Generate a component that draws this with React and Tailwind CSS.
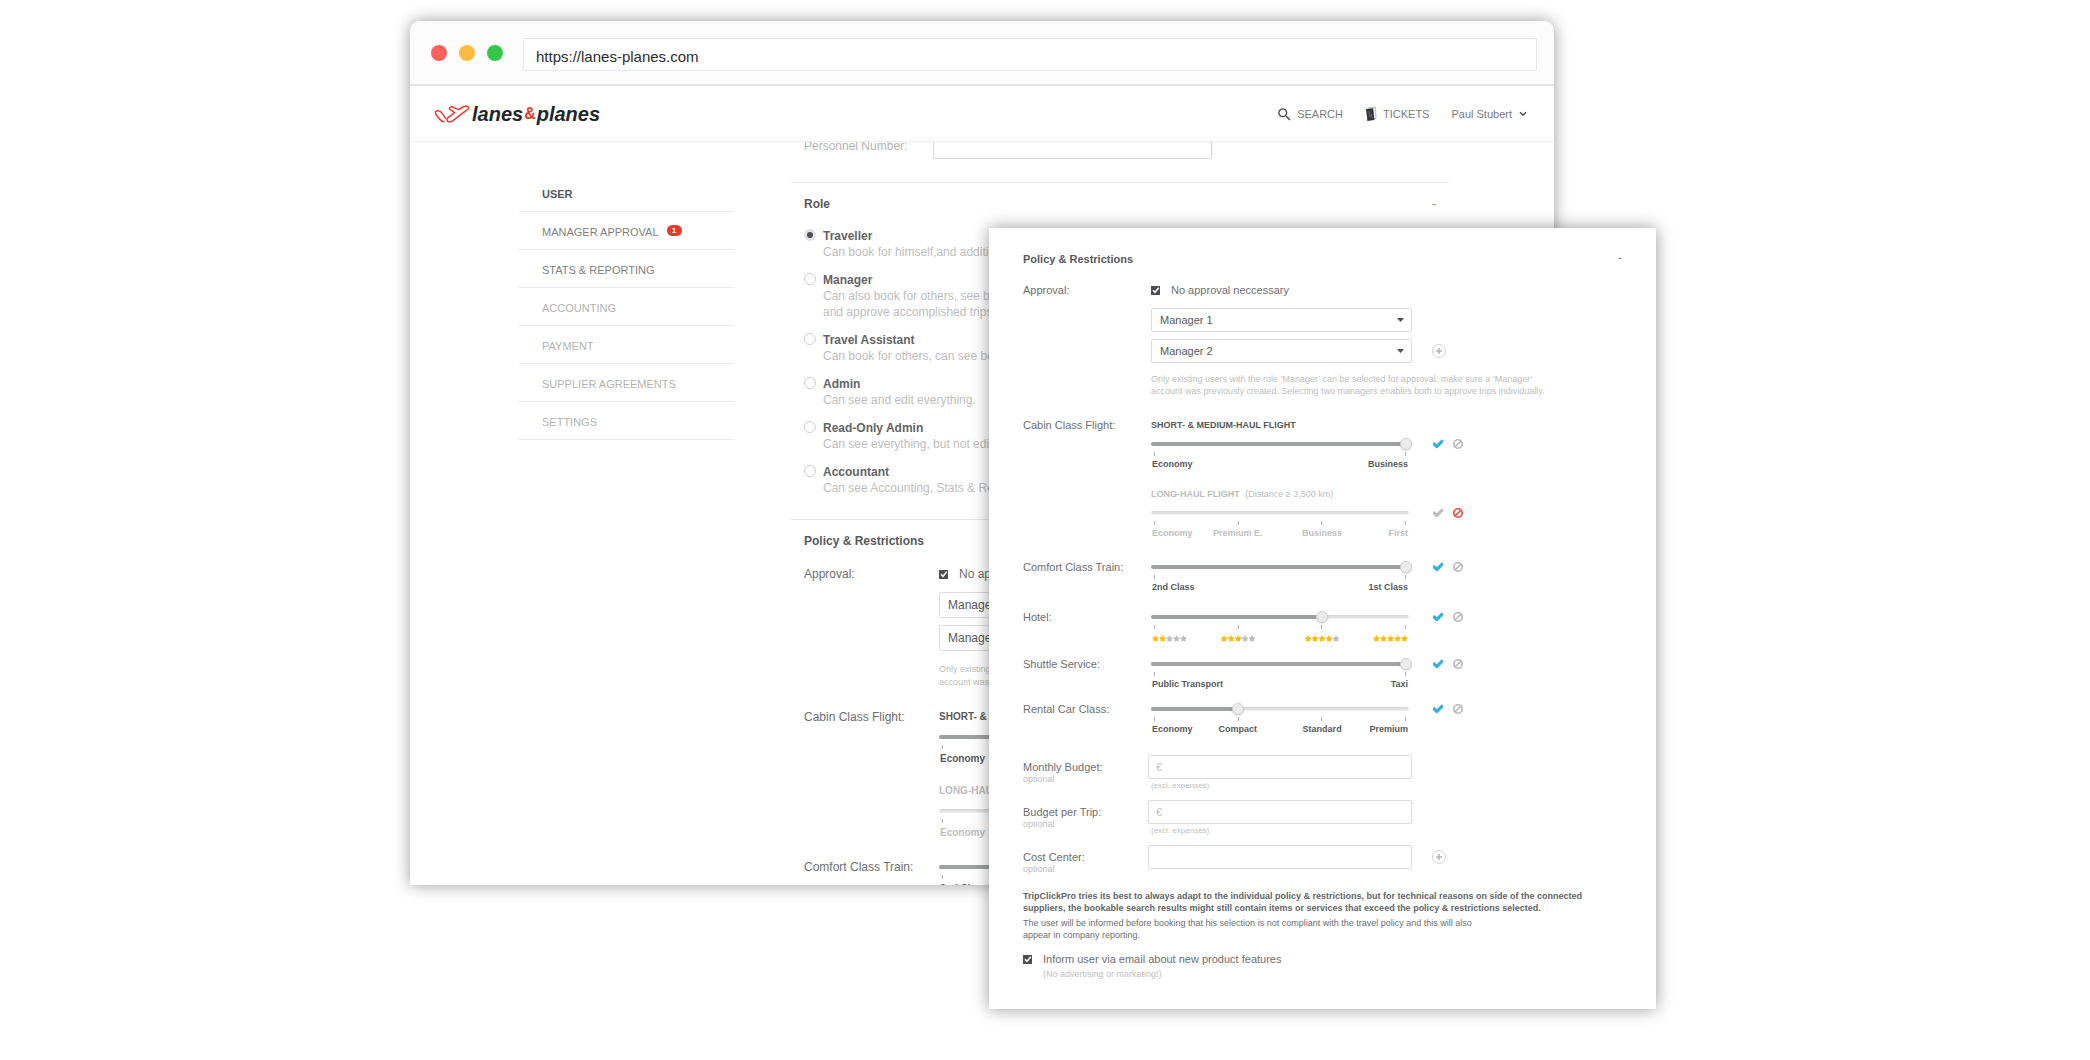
import { useState } from 'react';
import { FaCheck, FaStar } from 'react-icons/fa';
import { MdSearch } from 'react-icons/md';
import { ChevronDown } from 'lucide-react';

// Two densities of the same policy form: inside the page and in the detached sheet
const REGULAR = {
  title: 'text-[12px]',
  text: 'text-[12px]',
  row: 'grid grid-cols-[135px_1fr]',
  approval: 'mt-[17px]',
  control: 'h-[26px] w-[275px]',
  hint: 'mt-3 w-[460px] text-[9px] leading-[13px]',
  track: 'w-[272px]',
  heading: 'text-[10px]',
  slider: 'mt-[6px]',
  ticks: 'mt-[2px]',
  tickLabels: 'mt-[3px] h-[13px] text-[10px] leading-[13px]',
  longHaul: 'mt-[18px]',
  train: 'mt-[22px]',
};

const COMPACT = {
  title: 'text-[11px]',
  text: 'text-[11px]',
  row: 'grid grid-cols-[128px_1fr]',
  approval: 'mt-[15px]',
  control: 'h-6 w-[261px]',
  hint: 'mt-[10px] w-[440px] text-[9px] leading-3',
  track: 'w-[258px]',
  heading: 'text-[9px]',
  slider: 'mt-[5px]',
  ticks: 'mt-[2px]',
  tickLabels: 'mt-[2px] h-3 text-[9px] leading-3',
  longHaul: 'mt-4',
  train: 'mt-[22px]',
};

const MENU = [
  { label: 'USER', tone: 'font-bold text-[#58595b]' },
  { label: 'MANAGER APPROVAL', tone: 'text-[#808080]', badge: 1 },
  { label: 'STATS & REPORTING', tone: 'text-[#808080]' },
  { label: 'ACCOUNTING', tone: 'text-[#b3b3b3]' },
  { label: 'PAYMENT', tone: 'text-[#b3b3b3]' },
  { label: 'SUPPLIER AGREEMENTS', tone: 'text-[#b3b3b3]' },
  { label: 'SETTINGS', tone: 'text-[#b3b3b3]' },
];

const ROLES = [
  { name: 'Traveller', text: 'Can book for himself,and additional travellers.' },
  {
    name: 'Manager',
    text: 'Can also book for others, see bookings of his team and approve accomplished trips.',
  },
  { name: 'Travel Assistant', text: 'Can book for others, can see bookings.' },
  { name: 'Admin', text: 'Can see and edit everything.' },
  { name: 'Read-Only Admin', text: 'Can see everything, but not edit.' },
  { name: 'Accountant', text: 'Can see Accounting, Stats & Reporting.' },
];

const Logo = () => (
  <a href="#home" className="flex items-center text-[20px] leading-6 font-bold italic text-[#20262c]">
    <svg viewBox="103 281 108 54" className="h-[18px] w-9" fill="none" stroke="#e8392d" strokeWidth="4.500" strokeLinejoin="round" strokeLinecap="round">
      <path d="M138 321 L125 303 C121 298 112 297 108 301 C105 306 121 331 133 331" />
      <path d="M165 304 L149 293 C149 286 158 285 163 289 L177 295 L190 287 C197 283 207 284 207 290 C207 294 200 297 196 300 L160 328 C155 332 147 333 144 330 C140 327 142 321 146 318 Z" />
    </svg>
    <span className="ml-0.5">lanes</span>
    <span className="mx-px text-[16px] not-italic text-[#e8392d]">&amp;</span>
    <span>planes</span>
  </a>
);

const TicketIcon = () => (
  <svg viewBox="0 0 12 16" className="h-4 w-3">
    <path d="M3 2 L10.500 1 L11 12 L9 13" fill="#f4f4f4" stroke="#aaa" strokeWidth="0.8" />
    <path d="M1 3 L8.200 2.200 L9.400 14 L2.400 15 Z" fill="#2f353b" />
    <path d="M4 5 L5 11 M6.500 8 L6.800 12" stroke="#7d8388" strokeWidth="0.8" />
  </svg>
);

const BanIcon = ({ className }) => (
  <svg viewBox="0 0 10 10" className={`h-[10px] w-[10px] ${className}`} fill="none" stroke="currentColor" strokeWidth="1.600">
    <circle cx="5" cy="5" r="4.200" />
    <path d="M2.200 7.800 L7.800 2.200" />
  </svg>
);

const AddButton = ({ label }) => (
  <button type="button" aria-label={label} className="ml-5 text-[#b5b5b5]">
    <svg viewBox="0 0 14 14" className="h-[14px] w-[14px]" fill="none" stroke="currentColor">
      <circle cx="7" cy="7" r="6.500" stroke="#d2d2d2" />
      <path d="M7 4 V10 M4 7 H10" strokeWidth="1.500" />
    </svg>
  </button>
);

const Checkbox = ({ id, checked, onChange }) => (
  <span className="relative inline-flex h-[9px] w-[9px] shrink-0">
    <input
      id={id}
      type="checkbox"
      checked={checked}
      onChange={onChange}
      className="peer h-[9px] w-[9px] appearance-none border border-[#4d4f52] checked:bg-[#4d4f52]"
    />
    <svg viewBox="0 0 9 9" className="pointer-events-none absolute inset-0 hidden h-[9px] w-[9px] peer-checked:block" fill="none" stroke="#fff" strokeWidth="1.500">
      <path d="M2 4.300 L4 6.300 L7.800 1.800" />
    </svg>
  </span>
);

const Select = ({ label, value, className }) => (
  <span className="relative inline-flex">
    <select
      aria-label={label}
      defaultValue={value}
      className={`appearance-none rounded-[2px] border border-[#dcdcdc] bg-white pl-2 pr-6 text-[#58595b] ${className}`}
    >
      <option>Manager 1</option>
      <option>Manager 2</option>
    </select>
    <svg viewBox="0 0 7 4" className="pointer-events-none absolute top-1/2 right-2 -mt-0.5 h-1 w-[7px]" fill="#4d4f52">
      <path d="M0 0 H7 L3.500 4 Z" />
    </svg>
  </span>
);

const Stars = ({ count }) => (
  <span className="flex" role="img" aria-label={`${count} stars`}>
    {[1, 2, 3, 4, 5].map((n) => (
      <FaStar key={n} className={`h-[7px] w-[7px] ${n <= count ? 'text-[#ffbb0e]' : 'text-[#bdbdbd]'}`} />
    ))}
  </span>
);

const TickLabel = ({ index, last, position, children }) => {
  if (index === 0) return <span className="absolute left-px">{children}</span>;
  if (index === last) return <span className="absolute right-px">{children}</span>;
  return (
    <span className="absolute -translate-x-1/2" style={{ left: `${position}%` }}>
      {children}
    </span>
  );
};

const ClassSlider = ({ label, stops, initial, disabled = false, size }) => {
  const [value, setValue] = useState(initial);
  const last = stops.length - 1;
  // ticks sit 3px inside either end of the track
  const tickPosition = (i) => 1 + (i / last) * 98;

  return (
    <div>
      <div className="flex items-center">
        <div className={`relative h-3 ${size.track}`}>
          <div className="absolute inset-x-0 top-1 h-1 rounded-full bg-gradient-to-b from-[#d4d4d4] to-[#f0f0f0]">
            {!disabled && (
              <div className="h-full rounded-full bg-[#a0a1a1]" style={{ width: `${tickPosition(value)}%` }} />
            )}
          </div>
          <input
            type="range"
            aria-label={label}
            min={0}
            max={last}
            value={value}
            disabled={disabled}
            onChange={(e) => setValue(Number(e.target.value))}
            className="absolute -left-[3px] h-3 w-[calc(100%+6px)] appearance-none bg-transparent disabled:opacity-0 [&::-webkit-slider-thumb]:h-3 [&::-webkit-slider-thumb]:w-3 [&::-webkit-slider-thumb]:appearance-none [&::-webkit-slider-thumb]:rounded-full [&::-webkit-slider-thumb]:border [&::-webkit-slider-thumb]:border-[#cfcfcf] [&::-webkit-slider-thumb]:bg-[#ebebeb] [&::-webkit-slider-thumb]:shadow-sm"
          />
        </div>
        <button type="button" aria-label={`Allow ${label}`} className={`ml-6 ${disabled ? 'text-[#bdbdbd]' : 'text-[#30b1dc]'}`}>
          <FaCheck className="h-[10px] w-[10px]" stroke="currentColor" strokeWidth={60} />
        </button>
        <button type="button" aria-label={`Block ${label}`} className="ml-[10px]">
          <BanIcon className={disabled ? 'text-[#f2463a]' : 'text-[#b5b5b5]'} />
        </button>
      </div>
      <div className={`flex h-1 justify-between px-[3px] ${size.ticks} ${size.track}`}>
        {stops.map((_, i) => (
          <span key={i} className="w-px bg-[#b0b0b0]" />
        ))}
      </div>
      <div className={`relative font-bold whitespace-nowrap ${disabled ? 'text-[#bdbdbd]' : 'text-[#58595b]'} ${size.tickLabels} ${size.track}`}>
        {stops.map((stop, i) => (
          <TickLabel key={i} index={i} last={last} position={tickPosition(i)}>
            {typeof stop === 'number' ? <span className="flex pt-1"><Stars count={stop} /></span> : stop}
          </TickLabel>
        ))}
      </div>
    </div>
  );
};

const SliderRow = ({ label, className, size, ...slider }) => (
  <div className={`${size.row} ${className}`}>
    <span className="leading-3">{label}:</span>
    <ClassSlider label={label} size={size} {...slider} />
  </div>
);

const BudgetField = ({ id, label, prefix, note, action }) => (
  <div className="grid grid-cols-[125px_1fr]">
    <label htmlFor={id} className="pt-1 leading-4">
      {label}:
      <span className="block text-[9px] leading-2 text-[#bdbdbd]">optional</span>
    </label>
    <div>
      <div className="flex items-center">
        <input
          id={id}
          type="text"
          placeholder={prefix}
          className="h-6 w-[264px] rounded-[2px] border border-[#dcdcdc] px-[7px] placeholder:text-[#bdbdbd]"
        />
        {action}
      </div>
      {note && <p className="mt-[2px] pl-[3px] text-[8px] leading-[10px] text-[#bdbdbd]">{note}</p>}
    </div>
  </div>
);

const PolicyForm = ({ id, size }) => {
  const [noApproval, setNoApproval] = useState(true);

  return (
    <section className={`text-[#6d6e70] ${size.text}`}>
      <div className="flex justify-between">
        <h2 className={`leading-4 font-bold text-[#58595b] ${size.title}`}>Policy &amp; Restrictions</h2>
        <button type="button" aria-label="Collapse policy" className="h-3 leading-3">-</button>
      </div>

      <div className={`${size.row} ${size.approval}`}>
        <span className="leading-4">Approval:</span>
        <div>
          <div className="flex h-4 items-center">
            <Checkbox id={`${id}-approval`} checked={noApproval} onChange={() => setNoApproval(!noApproval)} />
            <label htmlFor={`${id}-approval`} className="ml-[11px]">No approval neccessary</label>
          </div>
          <div className="mt-[10px] flex">
            <Select label="First manager" value="Manager 1" className={size.control} />
          </div>
          <div className="mt-[7px] flex items-center">
            <Select label="Second manager" value="Manager 2" className={size.control} />
            <AddButton label="Add manager" />
          </div>
          <p className={`text-[#bdbdbd] ${size.hint}`}>
            Only existing users with the role ‘Manager’ can be selected for approval; make sure a ‘Manager’
            <br />
            account was previously created. Selecting two managers enables both to approve trips individually.
          </p>
        </div>
      </div>

      <div className={`mt-5 ${size.row}`}>
        <span className="leading-4">Cabin Class Flight:</span>
        <div>
          <h3 className={`leading-4 font-bold text-[#58595b] ${size.heading}`}>SHORT- &amp; MEDIUM-HAUL FLIGHT</h3>
          <div className={size.slider}>
            <ClassSlider label="Short-haul class" stops={['Economy', 'Business']} initial={1} size={size} />
          </div>
          <h3 className={`leading-4 font-bold text-[#bdbdbd] ${size.heading} ${size.longHaul}`}>
            LONG-HAUL FLIGHT <span className="ml-[3px] font-normal">(Distance ≥ 3,500 km)</span>
          </h3>
          <div className={size.slider}>
            <ClassSlider label="Long-haul class" stops={['Economy', 'Premium E.', 'Business', 'First']} initial={0} disabled size={size} />
          </div>
        </div>
      </div>

      <SliderRow label="Comfort Class Train" stops={['2nd Class', '1st Class']} initial={1} size={size} className={size.train} />
      <SliderRow label="Hotel" stops={[2, 3, 4, 5]} initial={2} size={size} className="mt-[18px]" />
      <SliderRow label="Shuttle Service" stops={['Public Transport', 'Taxi']} initial={1} size={size} className="mt-[15px]" />
      <SliderRow label="Rental Car Class" stops={['Economy', 'Compact', 'Standard', 'Premium']} initial={1} size={size} className="mt-[13px]" />
    </section>
  );
};

const BrowserBar = () => (
  <div className="flex h-[65px] items-center border-b-2 border-[#e4e4e4] bg-[#fcfcfc] pr-[17px] pl-[21px]">
    <div className="flex gap-3">
      <span className="h-4 w-4 rounded-full bg-[#fc605b]" />
      <span className="h-4 w-4 rounded-full bg-[#fdbc40]" />
      <span className="h-4 w-4 rounded-full bg-[#34c749]" />
    </div>
    <input
      type="text"
      aria-label="Address"
      defaultValue="https://lanes-planes.com"
      className="mt-1 ml-5 h-[33px] min-w-0 flex-1 rounded-[2px] border border-[#e8e9f0] bg-white px-3 pt-1 text-[15px] text-[#2b2b2f]"
    />
  </div>
);

const PageHeader = () => (
  <header className="flex h-14 items-center justify-between border-b border-[#ececec] bg-white pr-[26px] pl-6">
    <Logo />
    <nav className="flex items-center pt-px text-[11px] text-[#7a7b7d]">
      <a href="#search" className="flex items-center gap-1">
        <MdSearch className="h-[17px] w-[17px] text-[#4d4f52]" />
        SEARCH
      </a>
      <a href="#tickets" className="ml-[22px] flex items-center gap-[6px]">
        <TicketIcon />
        TICKETS
      </a>
      <button type="button" className="ml-[22px] flex items-center gap-[6px]">
        Paul Stubert
        <ChevronDown className="h-[10px] w-[10px] text-[#58595b]" strokeWidth={4} />
      </button>
    </nav>
  </header>
);

const SideMenu = () => (
  <nav className="mt-8 w-[216px] shrink-0 text-[11px]">
    <ul>
      {MENU.map(({ label, tone, badge }) => (
        <li key={label} className="border-b border-[#e9e9e9]">
          <a href="#menu" className={`flex h-[37px] items-center px-6 pt-1 ${tone}`}>
            {label}
            {badge && (
              <span className="mb-1 ml-2 flex h-[11px] w-[15px] items-center justify-center rounded-full bg-[#e8392d] text-[8px] font-bold text-white">
                {badge}
              </span>
            )}
          </a>
        </li>
      ))}
    </ul>
  </nav>
);

const RoleSection = () => {
  const [role, setRole] = useState('Traveller');

  return (
    <section className="mt-[23px] border-t border-[#ececec] px-[13px] pt-[13px] text-[12px]">
      <div className="flex justify-between">
        <h2 className="leading-4 font-bold text-[#58595b]">Role</h2>
        <button type="button" aria-label="Collapse role" className="leading-4 text-[#808080]">-</button>
      </div>
      <div className="mt-4 flex flex-col gap-3">
        {ROLES.map(({ name, text }) => (
          <label key={name} className="flex w-[310px] gap-[7px] leading-4 text-[#bdbdbd]">
            <input
              type="radio"
              name="role"
              checked={role === name}
              onChange={() => setRole(name)}
              className="mt-px h-3 w-3 shrink-0 appearance-none rounded-full border border-[#cfcfcf] bg-white checked:border-[3px] checked:border-[#e2e2e2] checked:bg-[#4d4f52]"
            />
            <span>
              <span className="block font-bold text-[#636466]">{name}</span>
              {text}
            </span>
          </label>
        ))}
      </div>
    </section>
  );
};

const BrowserWindow = () => (
  <div className="mr-[102px] self-start overflow-hidden rounded-t-[10px] bg-white shadow-[0_0_16px_rgba(0,0,0,0.4)] [grid-area:1/1]">
    <BrowserBar />
    <PageHeader />
    <div className="flex h-[743px] gap-[57px] overflow-hidden pr-[105px] pl-[108px]">
      <SideMenu />
      <div className="-mt-[9px] min-w-0 flex-1">
        <div className="grid grid-cols-[129px_1fr] pl-[13px] text-[12px] leading-[26px]">
          <label htmlFor="personnel" className="text-[#b3b3b3]">Personnel Number:</label>
          <input id="personnel" type="text" className="h-[26px] w-[279px] rounded-[2px] border border-[#d8d8d8] px-2" />
        </div>
        <RoleSection />
        <div className="mt-[23px] border-t border-[#e4e4e4] px-[13px] pt-[13px]">
          <PolicyForm id="page" size={REGULAR} />
        </div>
      </div>
    </div>
  </div>
);

const PolicySheet = () => {
  const [inform, setInform] = useState(true);

  return (
    <div className="z-10 mt-[207px] w-[667px] max-w-full self-start justify-self-end bg-white px-[34px] pt-[23px] pb-7 text-[11px] text-[#6d6e70] shadow-[0_0_16px_rgba(0,0,0,0.4)] [grid-area:1/1]">
      <PolicyForm id="sheet" size={COMPACT} />
      <div className="mt-5 flex flex-col gap-[9px]">
        <BudgetField id="monthly" label="Monthly Budget" prefix="€" note="(excl. expenses)" />
        <BudgetField id="trip" label="Budget per Trip" prefix="€" note="(excl. expenses)" />
        <BudgetField id="cost" label="Cost Center" action={<AddButton label="Add cost center" />} />
      </div>
      <p className="mt-[17px] text-[9px] leading-3 font-bold text-[#636466]">
        TripClickPro tries its best to always adapt to the individual policy &amp; restrictions, but for technical reasons on side of the connected
        <br />
        suppliers, the bookable search results might still contain items or services that exceed the policy &amp; restrictions selected.
      </p>
      <p className="mt-[3px] text-[9px] leading-3">
        The user will be informed before booking that his selection is not compliant with the travel policy and this will also
        <br />
        appear in company reporting.
      </p>
      <div className="mt-[10px] flex h-4 items-center">
        <Checkbox id="inform" checked={inform} onChange={() => setInform(!inform)} />
        <label htmlFor="inform" className="ml-[11px]">Inform user via email about new product features</label>
      </div>
      <p className="pl-5 text-[9px] leading-[14px] text-[#bdbdbd]">(No advertising or marketing!)</p>
    </div>
  );
};

export default function App() {
  return (
    <main className="min-h-screen bg-white pt-[21px] pr-6 pb-10 font-['Liberation_Sans',Arial,sans-serif]">
      <div className="mx-auto grid max-w-[1246px]">
        <BrowserWindow />
        <PolicySheet />
      </div>
    </main>
  );
}
